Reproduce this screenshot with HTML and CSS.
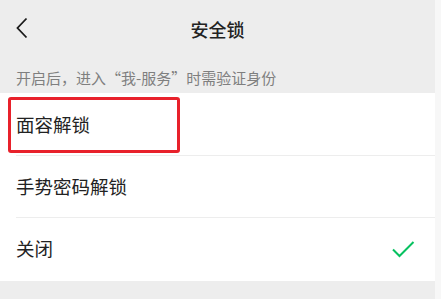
FILE: index.html
```html
<!DOCTYPE html>
<html lang="zh-CN">
<head>
<meta charset="utf-8">
<link rel="stylesheet" href="styles.css">
</head>
<body>
<div class="page">
  <div class="navbar">
    <svg class="back" width="14" height="22" viewBox="0 0 14 22"><path d="M11.5 1.5 L2.5 11 L11.5 20.5" fill="none" stroke="#1a1a1a" stroke-width="1.8"/></svg>
    <div class="title">安全锁</div>
  </div>
  <div class="desc">开启后，进入“我-服务”时需验证身份</div>
  <div class="list">
    <div class="row first">
      <span class="label">面容解锁</span>
      <div class="highlight"></div>
    </div>
    <div class="row">
      <span class="label">手势密码解锁</span>
    </div>
    <div class="row last">
      <span class="label">关闭</span>
      <svg class="check" width="24" height="18" viewBox="0 0 24 18"><path d="M2 9.5 L8.5 16 L22.5 2" fill="none" stroke="#07c160" stroke-width="2"/></svg>
    </div>
  </div>
</div>
</body>
</html>
```
FILE: styles.css
```css
html, body {
  margin: 0;
  padding: 0;
  background: #f7f7f7;
  font-family: "Noto Sans CJK SC", "Noto Sans", sans-serif;
}
.page {
  width: 435px;
  height: 299px;
  background: #ededed;
}
.navbar {
  position: relative;
  height: 58px;
  display: flex;
  align-items: center;
  justify-content: center;
}
.back {
  position: absolute;
  left: 15px;
  top: 17px;
}
.title {
  font-size: 18px;
  font-weight: 500;
  color: #222;
}
.desc {
  height: 35px;
  box-sizing: border-box;
  padding: 9px 0 0 16px;
  font-size: 15px;
  line-height: 22px;
  color: #7f7f7f;
}
.list {
  background: #fff;
}
.row {
  position: relative;
  height: 62px;
  display: flex;
  align-items: center;
  justify-content: space-between;
  padding: 0 20px 0 16px;
}
.row.last {
  height: 64px;
  padding-bottom: 2px;
  box-sizing: border-box;
}
.row + .row::before {
  content: "";
  position: absolute;
  left: 16px;
  right: 0;
  top: 0;
  height: 1px;
  background: #ededed;
}
.label {
  font-size: 18.5px;
  color: #222;
}
.highlight {
  position: absolute;
  left: 8px;
  top: 4px;
  width: 166px;
  height: 50px;
  border: 3px solid #e8212b;
  border-radius: 3px;
}
.check {
  margin-top: 1px;
}
```
